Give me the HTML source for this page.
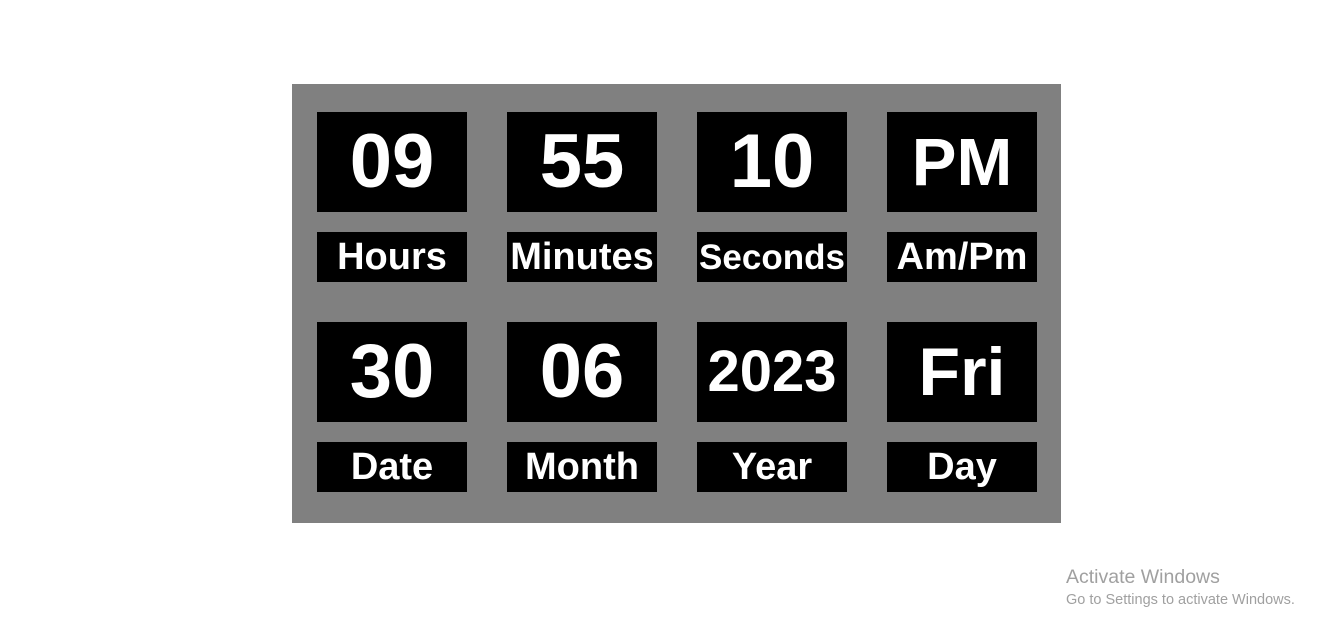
<!DOCTYPE html>
<html><head><style>
body{margin:0;width:1324px;height:635px;background:#fff;position:relative;overflow:hidden;font-family:"Liberation Sans",Arial,sans-serif}
.wrap{position:absolute;left:292px;top:84px;width:769px;height:439px;background:#808080}
.b{position:absolute;width:150px;background:#000;color:#fff;font-weight:bold;display:flex;align-items:center;justify-content:center;line-height:1}
.big{height:100px;font-size:76px}
.lab{height:50px;font-size:38px}
.aw{position:absolute;left:1066px;top:566px;color:#a0a0a0;font-size:19.5px}
.aw2{position:absolute;left:1066px;top:592px;color:#a0a0a0;font-size:14.5px}
</style></head><body>
<div class="wrap"></div>
<div class="b big" style="left:317px;top:112px">09</div>
<div class="b big" style="left:507px;top:112px">55</div>
<div class="b big" style="left:697px;top:112px">10</div>
<div class="b big" style="left:887px;top:112px;font-size:67px">PM</div>
<div class="b lab" style="left:317px;top:232px">Hours</div>
<div class="b lab" style="left:507px;top:232px">Minutes</div>
<div class="b lab" style="left:697px;top:232px;font-size:35px">Seconds</div>
<div class="b lab" style="left:887px;top:232px">Am/Pm</div>
<div class="b big" style="left:317px;top:322px">30</div>
<div class="b big" style="left:507px;top:322px">06</div>
<div class="b big" style="left:697px;top:322px;font-size:58px">2023</div>
<div class="b big" style="left:887px;top:322px;font-size:68px">Fri</div>
<div class="b lab" style="left:317px;top:442px">Date</div>
<div class="b lab" style="left:507px;top:442px">Month</div>
<div class="b lab" style="left:697px;top:442px">Year</div>
<div class="b lab" style="left:887px;top:442px">Day</div>
<div class="aw">Activate Windows</div>
<div class="aw2">Go to Settings to activate Windows.</div>
</body></html>
